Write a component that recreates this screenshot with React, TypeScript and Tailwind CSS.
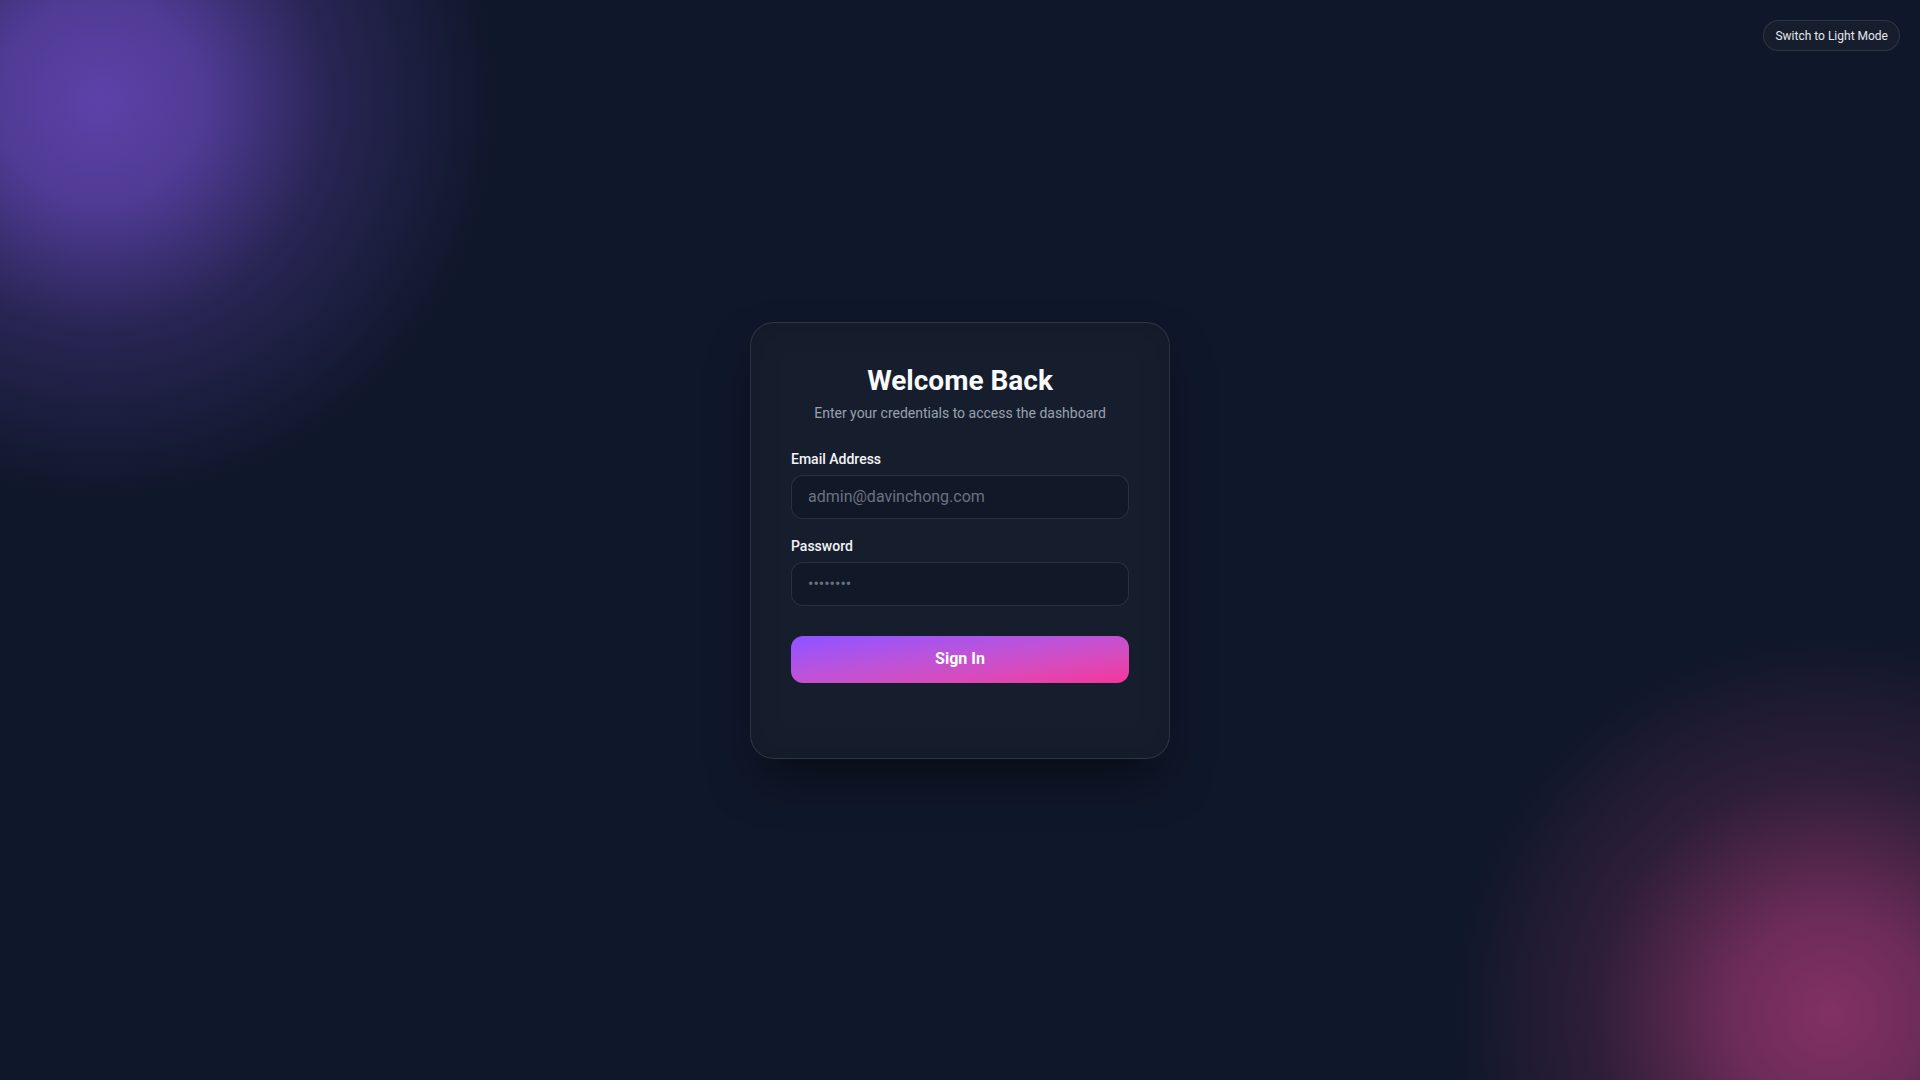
import React, { useState } from "react";

export default function App() {
  const [email, setEmail] = useState("");
  const [password, setPassword] = useState("");

  return (
    <div
      className="relative min-h-screen w-full overflow-hidden bg-[#0f172a] flex items-center justify-center"
      style={{ fontFamily: "Roboto, 'Noto Sans', sans-serif" }}
    >
      {/* Background glows */}
      <div className="pointer-events-none absolute -left-[300px] -top-[300px] h-[800px] w-[800px] bg-[radial-gradient(circle_closest-side,rgba(139,92,246,0.62)_0%,rgba(139,92,246,0.52)_26%,rgba(139,92,246,0.2)_58%,rgba(139,92,246,0)_100%)]" />
      <div className="pointer-events-none absolute left-[1450px] top-[633px] h-[760px] w-[760px] bg-[radial-gradient(circle_closest-side,rgba(236,72,153,0.52)_0%,rgba(236,72,153,0.42)_26%,rgba(236,72,153,0.14)_62%,rgba(236,72,153,0)_100%)]" />

      {/* Theme toggle */}
      <button className="absolute right-5 top-5 flex h-[31px] items-center rounded-full border border-white/10 bg-[#161e2e] px-[11px] text-xs text-gray-200">
        Switch to Light Mode
      </button>

      {/* Login card */}
      <div className="relative w-[420px] rounded-3xl border border-white/10 bg-[#161e2e] px-10 pt-[42px] pb-10 shadow-[0_25px_50px_-12px_rgba(0,0,0,0.5),inset_0_0_30px_rgba(0,0,0,0.18)]">
        <div className="mb-[26px] text-center">
          <h1 className="text-[28px] leading-8 font-bold text-gray-50">Welcome Back</h1>
          <p className="mt-1.5 text-sm text-gray-400">
            Enter your credentials to access the dashboard
          </p>
        </div>

        <form className="flex flex-col" onSubmit={(e) => e.preventDefault()}>
          <div className="flex flex-col gap-1.5">
            <label className="text-sm font-medium text-gray-100">Email Address</label>
            <input
              type="email"
              value={email}
              onChange={(e) => setEmail(e.target.value)}
              placeholder="admin@davinchong.com"
              className="h-11 rounded-xl border border-white/10 bg-[#111827] px-4 text-base text-gray-100 placeholder:text-gray-500 outline-none"
            />
          </div>

          <div className="mt-[17px] flex flex-col gap-1.5">
            <label className="text-sm font-medium text-gray-100">Password</label>
            <input
              type="password"
              value={password}
              onChange={(e) => setPassword(e.target.value)}
              placeholder="••••••••"
              className="h-11 rounded-xl border border-white/10 bg-[#111827] px-4 text-base text-gray-100 placeholder:text-gray-500 outline-none"
            />
          </div>

          <button
            type="submit"
            className="mt-[30px] h-[47px] rounded-xl bg-linear-to-br from-violet-500 to-pink-500 text-base font-bold text-white"
          >
            Sign In
          </button>

          {/* reserved space for messages */}
          <div className="h-[35px]" />
        </form>
      </div>
    </div>
  );
}
